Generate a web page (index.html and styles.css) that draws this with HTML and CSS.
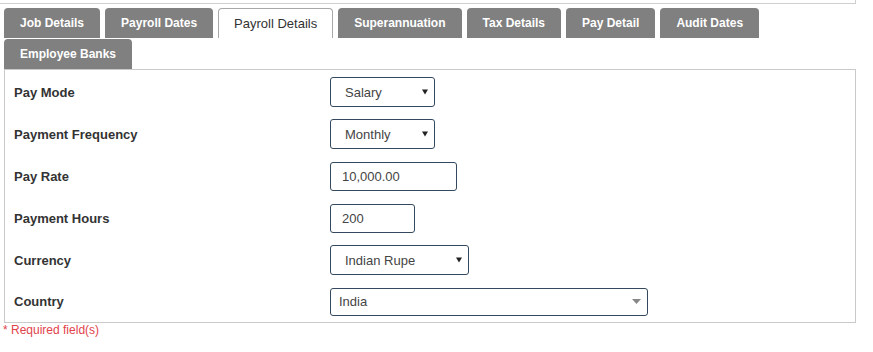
FILE: index.html
```html
<!DOCTYPE html>
<html>
<head>
<meta charset="utf-8">
<link rel="stylesheet" href="styles.css">
</head>
<body>
<div class="top-strip"></div>
<div class="wrap">
  <div class="tabs">
    <div class="tab">Job Details</div>
    <div class="tab">Payroll Dates</div>
    <div class="tab active">Payroll Details</div>
    <div class="tab">Superannuation</div>
    <div class="tab">Tax Details</div>
    <div class="tab">Pay Detail</div>
    <div class="tab">Audit Dates</div>
    <div class="tab">Employee Banks</div>
  </div>
  <div class="panel">
    <div class="row">
      <div class="label">Pay Mode</div>
      <div class="select w-mode"><span>Salary</span><svg class="caret" width="6" height="6" viewBox="0 0 6 6"><path d="M0 0.5H6L3 5.5Z" fill="#222"/></svg></div>
    </div>
    <div class="row">
      <div class="label">Payment Frequency</div>
      <div class="select w-mode"><span>Monthly</span><svg class="caret" width="6" height="6" viewBox="0 0 6 6"><path d="M0 0.5H6L3 5.5Z" fill="#222"/></svg></div>
    </div>
    <div class="row">
      <div class="label">Pay Rate</div>
      <div class="input w-rate">10,000.00</div>
    </div>
    <div class="row">
      <div class="label">Payment Hours</div>
      <div class="input w-hours">200</div>
    </div>
    <div class="row">
      <div class="label">Currency</div>
      <div class="select w-cur"><span>Indian Rupe</span><svg class="caret" width="6" height="6" viewBox="0 0 6 6"><path d="M0 0.5H6L3 5.5Z" fill="#222"/></svg></div>
    </div>
    <div class="row">
      <div class="label">Country</div>
      <div class="select2 w-country"><span>India</span><svg class="caret2" width="9" height="5" viewBox="0 0 9 5"><path d="M0 0H9L4.5 5Z" fill="#888"/></svg></div>
    </div>
  </div>
  <div class="req">* Required field(s)</div>
</div>
</body>
</html>
```
FILE: styles.css
```css
html, body {
  margin: 0;
  padding: 0;
  background: #fff;
  font-family: "Liberation Sans", Arial, sans-serif;
}
.top-strip {
  width: 855px;
  height: 3px;
  border-bottom: 1px solid #cfcfcf;
  border-right: 1px solid #cfcfcf;
}
.wrap {
  width: 852px;
  margin-left: 4px;
  margin-top: 4px;
}
.tabs {
  display: flex;
  flex-wrap: wrap;
  column-gap: 5px;
  row-gap: 1px;
}
.tab {
  height: 30px;
  line-height: 30px;
  padding: 0 16px;
  background: #808080;
  color: #fff;
  font-weight: bold;
  font-size: 12px;
  border-radius: 4px 4px 0 0;
  white-space: nowrap;
}
.tab.active {
  background: #fff;
  color: #333;
  font-weight: normal;
  font-size: 13px;
  border: 1px solid #a8a8a8;
  border-bottom: none;
  height: 29px;
  line-height: 29px;
  padding: 0 15px;
}
.panel {
  border: 1px solid #cacaca;
  padding: 1px 0 0 9px;
}
.row {
  display: flex;
  align-items: center;
  height: 42px;
}
.row:last-child {
  height: 41px;
}
.label {
  width: 316px;
  font-size: 13px;
  font-weight: bold;
  color: #333;
}
.select, .input, .select2 {
  box-sizing: border-box;
  border: 1px solid #34495e;
  border-radius: 3px;
  font-size: 13px;
  color: #444;
  display: flex;
  align-items: center;
}
.select {
  height: 30px;
  padding: 0 6px 0 14px;
  justify-content: space-between;
}
.select2 {
  height: 28px;
  padding: 0 6px 0 8px;
  justify-content: space-between;
}
.input {
  height: 29px;
  padding: 0 11px;
}
.caret {
  margin-top: -1px;
}
.w-mode { width: 105px; }
.w-rate { width: 127px; }
.w-hours { width: 85px; }
.w-cur { width: 139px; }
.w-country { width: 318px; }
.req {
  font-size: 12px;
  color: #e2434b;
  margin-left: -1px;
  line-height: 14px;
}
```
